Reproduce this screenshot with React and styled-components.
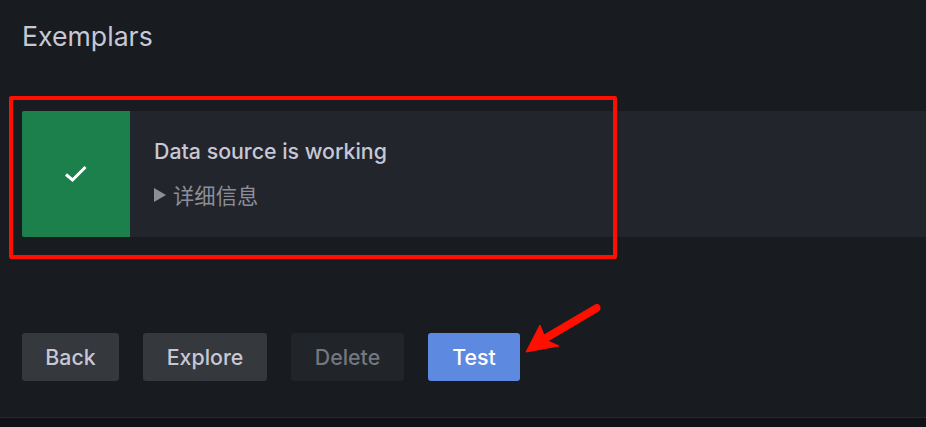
import React from 'react'
import styled, { createGlobalStyle } from 'styled-components'

const GlobalStyle = createGlobalStyle`
    html, body {
        margin: 0;
        padding: 0;
        background: #181b1f;
    }
`

const Page = styled.div`
    position: relative;
    width: 926px;
    height: 427px;
    overflow: hidden;
    box-sizing: border-box;
    padding: 19px 0 0 22px;
    background: #181b1f;
    font-family: Inter, "Noto Sans CJK SC", sans-serif;
    display: flex;
    flex-direction: column;
`

const Title = styled.h3`
    margin: 0;
    height: 34px;
    line-height: 34px;
    font-size: 26.67px;
    font-weight: 400;
    color: #c7c7d5;
`

const Alert = styled.div`
    display: flex;
    height: 126px;
    margin-top: 58px;
    background: #22252b;
    border-radius: 2px 0 0 2px;
`

const AlertIcon = styled.div`
    width: 108px;
    flex: none;
    display: flex;
    align-items: center;
    justify-content: center;
    background: #1b804c;
    border-radius: 2px 0 0 2px;
`

const AlertBody = styled.div`
    padding: 26px 24px 0;
`

const AlertTitle = styled.div`
    height: 28px;
    line-height: 28px;
    font-size: 21.33px;
    font-weight: 500;
    color: #c7c7d5;
`

const Details = styled.div`
    display: flex;
    align-items: center;
    gap: 7px;
    margin-top: 16px;
    height: 28px;
    font-family: "Noto Sans CJK SC", sans-serif;
    font-size: 21.33px;
    line-height: 28px;
    color: #8e8e9b;
`

const Caret = styled.span`
    width: 0;
    height: 0;
    flex: none;
    border-style: solid;
    border-width: 7px 0 7px 12px;
    border-color: transparent transparent transparent #8e8e9b;
`

const ButtonRow = styled.div`
    display: flex;
    gap: 24px;
    margin-top: 96px;
`

const Button = styled.button`
    box-sizing: border-box;
    height: 48px;
    width: ${p => p.$width}px;
    padding: 0;
    border: 0;
    border-radius: 3px;
    font-family: Inter, sans-serif;
    font-size: 21.33px;
    font-weight: 500;
    background: ${p => (p.$variant === 'primary' ? '#5d89e0' : p.$variant === 'disabled' ? '#212429' : '#35383d')};
    color: ${p => (p.$variant === 'primary' ? '#ffffff' : p.$variant === 'disabled' ? '#75777e' : '#c7c7d5')};
`

const Footer = styled.div`
    position: absolute;
    left: 0;
    right: 0;
    top: 417px;
    bottom: 0;
    background: #111217;
    border-top: 1px solid #25272c;
`

const RedBox = styled.div`
    position: absolute;
    left: 9px;
    top: 96px;
    width: 608px;
    height: 163px;
    box-sizing: border-box;
    border: 4px solid #ff0f00;
    border-radius: 2px;
`

const Arrow = styled.svg`
    position: absolute;
    left: 520px;
    top: 298px;
`

export default function App() {
    return (
        <Page>
            <GlobalStyle />
            <Title>Exemplars</Title>
            <Alert>
                <AlertIcon>
                    <svg width="24" height="24" viewBox="0 0 24 24" fill="none">
                        <path d="M2 12.5 L8.5 18 L21.5 5" stroke="#fff" strokeWidth="3" />
                    </svg>
                </AlertIcon>
                <AlertBody>
                    <AlertTitle>Data source is working</AlertTitle>
                    <Details>
                        <Caret />
                        详细信息
                    </Details>
                </AlertBody>
            </Alert>
            <ButtonRow>
                <Button $width={97}>Back</Button>
                <Button $width={124}>Explore</Button>
                <Button $width={113} $variant="disabled">Delete</Button>
                <Button $width={92} $variant="primary">Test</Button>
            </ButtonRow>
            <Footer />
            <RedBox />
            <Arrow width="90" height="60" viewBox="0 0 90 60">
                <path d="M6 54 L20 27 L24 37 L75 7 Q79 5 80 9 Q81 12 77 14 L28 43 L39 48 Z" fill="#ff0f00" stroke="#ff0f00" strokeWidth="1" strokeLinejoin="round" />
            </Arrow>
        </Page>
    )
}
